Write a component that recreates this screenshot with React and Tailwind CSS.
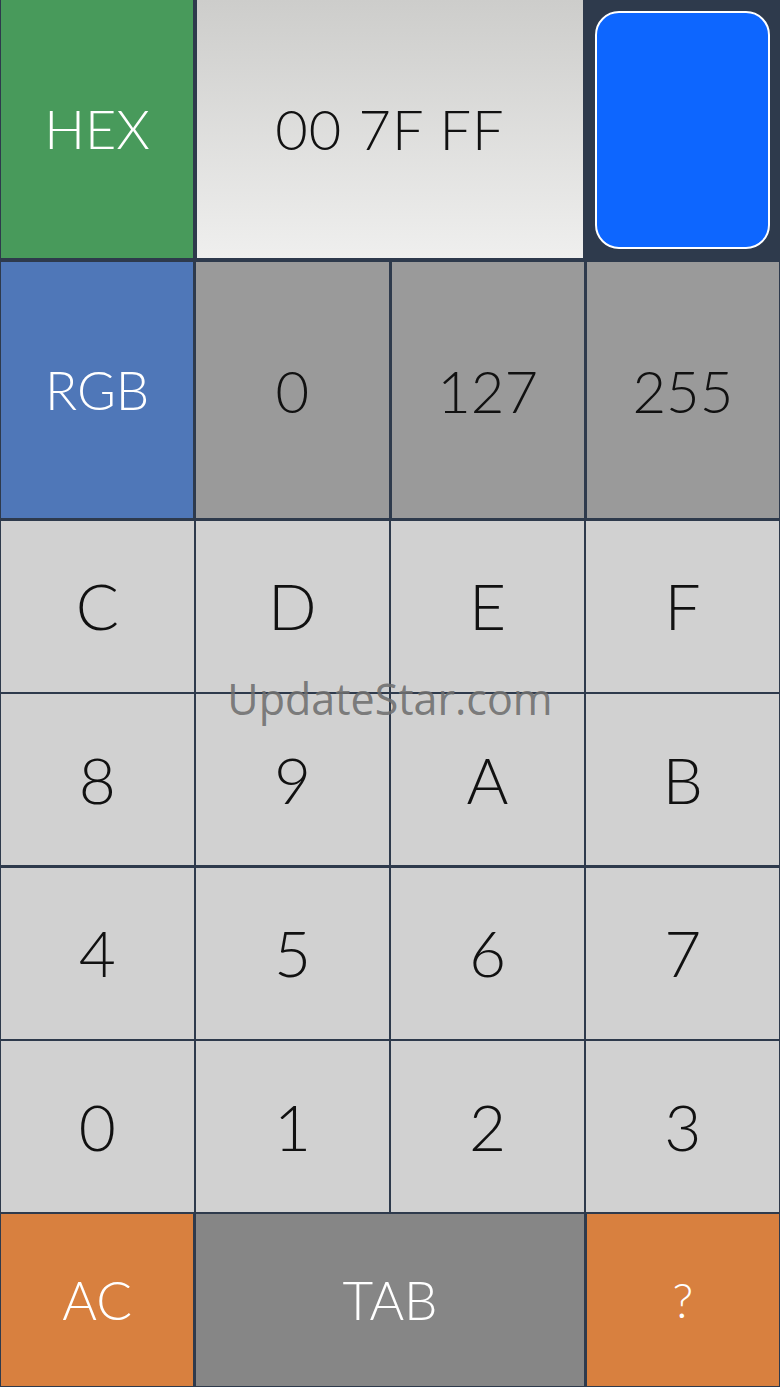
export default function App() {
  const keys = ['C', 'D', 'E', 'F', '8', '9', 'A', 'B', '4', '5', '6', '7', '0', '1', '2', '3'];
  const rgb = [0, 127, 255];

  return (
    <div
      className="relative w-[780px] h-[1387px] bg-[#2e3a4c] flex flex-col px-px pb-px overflow-hidden font-light"
      style={{ fontFamily: 'Lato, "Noto Sans", sans-serif' }}
    >
      {/* Top row: mode + hex display + swatch */}
      <div className="h-[258px] flex gap-[4px]">
        <div className="w-[192px] bg-[#489a5b] flex items-center justify-center text-white text-[54px] pb-px">HEX</div>
        <div className="w-[386px] bg-gradient-to-b from-[#cdcdcb] to-[#efefee] flex items-center justify-center text-[#111] text-[56px] tracking-[1px] pb-px">
          00 7F FF
        </div>
        <div className="flex-1 flex items-center justify-center pl-[8px] pr-[9px] pt-[11px] pb-[9px]">
          <div className="w-full h-full bg-[#0d66ff] rounded-[24px] border-2 border-white"></div>
        </div>
      </div>

      {/* RGB row */}
      <div className="h-[256px] mt-[4px] grid grid-cols-4 gap-[3px]">
        <div className="bg-[#4f77b8] flex items-center justify-center text-white text-[53px]">RGB</div>
        {rgb.map(v => (
          <div key={v} className="bg-[#9a9a9a] flex items-center justify-center text-[#111] text-[58px]">{v}</div>
        ))}
      </div>

      {/* Keypad */}
      <div className="mt-[3px] grid grid-cols-4 grid-rows-4 gap-[2.5px] h-[691px]">
        {keys.map((k, i) => (
          <div key={i} className="bg-[#d1d1d1] flex items-center justify-center text-[#111] text-[64px]">{k}</div>
        ))}
      </div>

      {/* Bottom row */}
      <div className="mt-[2px] flex-1 grid grid-cols-4 gap-[3px]">
        <div className="bg-[#d8803f] flex items-center justify-center text-white text-[53px]">AC</div>
        <div className="col-span-2 bg-[#868686] flex items-center justify-center text-white text-[53px]">TAB</div>
        <div className="bg-[#d8803f] flex items-center justify-center text-white text-[48px]">?</div>
      </div>

      {/* Watermark */}
      <div
        className="absolute left-0 right-0 top-[667px] text-center text-[43px] font-normal text-[#6f6f6f]/90 pointer-events-none"
        style={{ fontFamily: '"Open Sans", "Noto Sans", sans-serif' }}
      >
        UpdateStar.com
      </div>
    </div>
  );
}
